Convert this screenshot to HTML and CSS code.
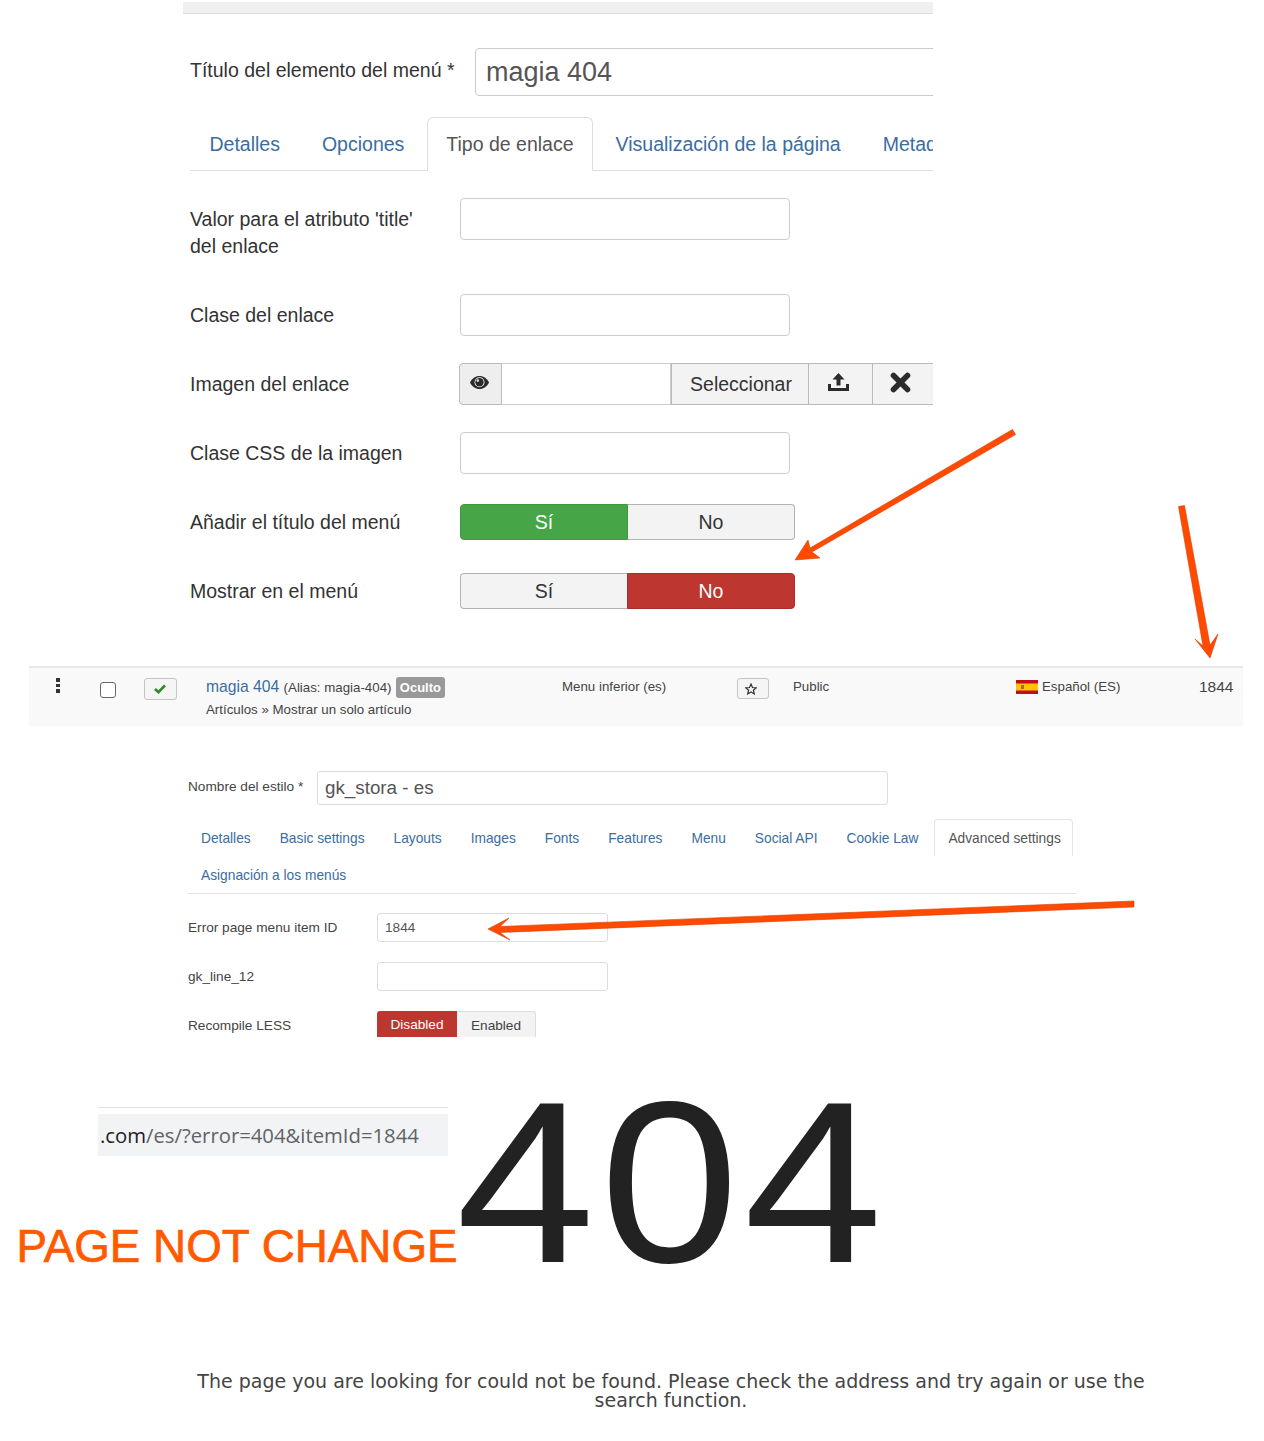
FILE: index.html
```html
<!DOCTYPE html>
<html lang="es">
<head>
<meta charset="utf-8">
<title>magia 404</title>
<link rel="stylesheet" href="styles.css">
</head>
<body>
<section class="menu-form">
  <div class="topbar"></div>
  <div class="title-row">
    <label class="title-label">Título del elemento del menú *</label>
    <div class="title-input">magia 404</div>
  </div>
  <ul class="tabs">
    <li class="tab">Detalles</li>
    <li class="tab">Opciones</li>
    <li class="tab active">Tipo de enlace</li>
    <li class="tab">Visualización de la página</li>
    <li class="tab">Metadatos</li>
  </ul>
  <div class="row row-two"><label class="lbl">Valor para el atributo 'title'<br>del enlace</label><div class="field"></div></div>
  <div class="row"><label class="lbl">Clase del enlace</label><div class="field"></div></div>
  <div class="row"><label class="lbl">Imagen del enlace</label>
    <div class="media">
      <span class="m-eye"><svg width="19" height="13" viewBox="0 0 19 13"><path fill="#2b2b2b" d="M9.500 0C5.300 0 2 2.600 0 6.500 2 10.400 5.300 13 9.500 13s7.500-2.600 9.500-6.500C17 2.600 13.700 0 9.500 0z"/><circle cx="9.500" cy="6.300" r="5" fill="#fff"/><circle cx="9.500" cy="6.300" r="4.200" fill="#2b2b2b"/><circle cx="7.800" cy="4.600" r="1.300" fill="#ddd"/></svg></span>
      <span class="m-input"></span>
      <span class="m-btn m-select">Seleccionar</span>
      <span class="m-btn m-up"><svg width="21" height="18" viewBox="0 0 21 18"><path fill="#2b2b2b" d="M10.500 0l6 6.500h-4v6h-4v-6h-4zM0 11h3v4h15v-4h3v7H0z"/></svg></span>
      <span class="m-btn m-x"><svg width="21" height="21" viewBox="0 0 21 21"><path fill="none" stroke="#2b2b2b" stroke-width="5.600" stroke-linecap="round" d="M3.500 3.500l14 14M17.500 3.500l-14 14"/></svg></span>
    </div>
  </div>
  <div class="row row-last-input"><label class="lbl">Clase CSS de la imagen</label><div class="field"></div></div>
  <div class="row row-toggle"><label class="lbl lbl-toggle">Añadir el título del menú</label>
    <div class="toggle"><span class="t-on-green">Sí</span><span class="t-off">No</span></div>
  </div>
  <div class="row row-toggle row-end"><label class="lbl lbl-toggle">Mostrar en el menú</label>
    <div class="toggle"><span class="t-off t-left">Sí</span><span class="t-on-red">No</span></div>
  </div>
</section>

<section class="list-row">
  <div class="c-drag"><i></i><i></i><i></i></div>
  <div class="c-check"><span class="checkbox"></span></div>
  <div class="c-status"><span class="mini-btn"><svg width="12" height="10" viewBox="0 0 12 10"><path fill="none" stroke="#2b8a2b" stroke-width="2.600" d="M1 5l3.500 3.200L11 1.300"/></svg></span></div>
  <div class="c-title">
    <div class="c-title-top"><span class="item-link">magia 404</span> <span class="small">(Alias: magia-404)</span> <span class="badge">Oculto</span></div>
    <div class="small sub">Artículos » Mostrar un solo artículo</div>
  </div>
  <div class="c-menu small">Menu inferior (es)</div>
  <div class="c-star"><span class="mini-btn star-btn"><svg width="12" height="12" viewBox="0 0 24 24"><path fill="none" stroke="#333" stroke-width="2.400" d="M12 2l3 7 7.500.6-5.700 4.900 1.800 7.300L12 18l-6.600 3.800 1.800-7.300L1.500 9.600 9 9z"/></svg></span></div>
  <div class="c-access small">Public</div>
  <div class="c-lang small"><svg class="flag" width="22" height="14" viewBox="0 0 22 14"><rect width="22" height="14" fill="#c60b1e"/><rect y="3.500" width="22" height="7" fill="#ffc400"/><rect x="5" y="5" width="3" height="4" fill="#ad6a1e"/></svg>Español (ES)</div>
  <div class="c-id">1844</div>
</section>

<section class="style-form">
  <div class="style-title"><label class="style-label">Nombre del estilo *</label><div class="style-input">gk_stora - es</div></div>
  <ul class="tabs2">
    <li class="tab2">Detalles</li>
    <li class="tab2">Basic settings</li>
    <li class="tab2">Layouts</li>
    <li class="tab2">Images</li>
    <li class="tab2">Fonts</li>
    <li class="tab2">Features</li>
    <li class="tab2">Menu</li>
    <li class="tab2">Social API</li>
    <li class="tab2">Cookie Law</li>
    <li class="tab2 active2">Advanced settings</li>
    <li class="tab2">Asignación a los menús</li>
  </ul>
  <div class="s-row"><label class="s-lbl">Error page menu item ID</label><div class="s-field">1844</div></div>
  <div class="s-row"><label class="s-lbl">gk_line_12</label><div class="s-field"></div></div>
  <div class="s-row s-row-end"><label class="s-lbl">Recompile LESS</label>
    <div class="s-toggle"><span class="s-dis">Disabled</span><span class="s-en">Enabled</span></div>
  </div>
</section>

<section class="error-part">
  <div class="error-left">
    <div class="url-bar"><span class="url-dark">.com</span>/es/?error=404&amp;itemId=1844</div>
    <div class="not-change">PAGE NOT CHANGE</div>
  </div>
  <div class="big404">404</div>
</section>
<p class="error-msg">The page you are looking for could not be found. Please check the address and try again or use the search function.</p>

<svg class="arrows" width="1264" height="1441" viewBox="0 0 1264 1441">
  <g fill="#ff4a00" stroke="#d93c00" stroke-width="0.600">
    <polygon points="1012.500,429.400 1015.500,434.600 812,552 820,558 795,560 808,540 810,548"/>
    <polygon points="1178.500,506.500 1184.500,505.500 1210,645 1218,634 1210,658 1195,639 1203,646"/>
    <polygon points="1134,901 1134,907 500,932.500 510,940 488,929 509,918 500,926.500"/>
  </g>
</svg>
</body>
</html>
```
FILE: styles.css
```css
* { box-sizing: border-box; }
html, body { margin: 0; padding: 0; }
body {
  position: relative;
  width: 1264px;
  height: 1441px;
  overflow: hidden;
  background: #fff;
  color: #333;
  font-family: "Liberation Sans", Arial, sans-serif;
}
ul { list-style: none; margin: 0; padding: 0; }

/* first form */
.menu-form {
  width: 750px;
  margin: 2px 0 0 183px;
  overflow: hidden;
  font-size: 19.5px;
  line-height: 27px;
}
.topbar { height: 12px; background: #f0f0f0; border-bottom: 1px solid #ddd; }
.title-row { display: flex; align-items: center; margin: 34px 0 21px 7px; }
.title-label { flex: none; width: 285px; padding-bottom: 4px; white-space: nowrap; }
.title-input {
  flex: none;
  width: 480px;
  height: 48px;
  padding: 0 10px;
  border: 1px solid #ccc;
  border-radius: 4px;
  font-size: 27px;
  line-height: 47px;
  color: #555;
}
.tabs {
  display: flex;
  flex-wrap: nowrap;
  gap: 3px;
  margin: 0 0 27px 7px;
  width: 900px;
  height: 54px;
  border-bottom: 1px solid #ddd;
}
.tab {
  flex: none;
  height: 54px;
  padding: 0 19.500px;
  line-height: 55px;
  color: #3b6d9f;
  white-space: nowrap;
}
.tab.active {
  padding: 0 18.500px;
  background: #fff;
  color: #555;
  border: 1px solid #ddd;
  border-bottom-color: #fff;
  border-radius: 6px 6px 0 0;
  line-height: 53px;
}
.row { display: flex; margin: 0 0 27px 7px; }
.row-two { margin-bottom: 34px; }
.row-last-input { margin-bottom: 30px; }
.row-toggle { margin-bottom: 33px; }
.row-end { margin-bottom: 0; }
.lbl { flex: none; width: 270px; padding-top: 8px; }
.lbl-toggle { padding-top: 5px; }
.field { width: 330px; height: 42px; border: 1px solid #ccc; border-radius: 4px; }
.media { display: flex; flex: none; width: 480px; height: 42px; margin-left: -1px; }
.media > span { display: flex; align-items: center; justify-content: center; height: 42px; border: 1px solid #bbb; border-left: 0; }
.media .m-eye { width: 43px; border-left: 1px solid #bbb; background: #eee; border-radius: 4px 0 0 4px; padding: 0 3px 4px 0; }
.media .m-input { width: 169px; background: #fff; border-color: #ccc; }
.media .m-btn { background: #f3f3f3; color: #333; }
.media .m-select { width: 138px; border-left: 1px solid #bbb; padding-left: 2px; }
.media .m-up { width: 64px; padding: 0 4px 4px 0; }
.media .m-x { width: 66px; justify-content: flex-start; padding: 0 0 4px 17px; }
.toggle { display: flex; width: 335px; height: 36px; line-height: 34px; text-align: center; }
.toggle span { flex: none; }
.t-on-green { width: 168px; background: #46a546; color: #fff; border: 1px solid #3f9a3f; border-radius: 4px 0 0 4px; }
.t-off { width: 167px; background: #f3f3f3; border: 1px solid #b3b3b3; border-left: 0; border-radius: 0 4px 4px 0; }
.t-off.t-left { border: 1px solid #b3b3b3; border-right: 0; border-radius: 4px 0 0 4px; }
.t-on-red { width: 168px; background: #bd362f; color: #fff; border: 1px solid #a92f29; border-radius: 0 4px 4px 0; }

/* list row */
.list-row {
  display: flex;
  width: 1214px;
  height: 60px;
  margin: 57px 0 0 29px;
  background: #f9f9f9;
  border-top: 2px solid #e8e8e8;
  font-size: 15.500px;
}
.small { font-size: 13.300px; color: #444; }
.list-row > div { flex: none; }
.c-drag { display: flex; flex-direction: column; gap: 2px; width: 71px; padding: 10px 0 0 27px; }
.c-drag i { display: block; width: 4px; height: 3.500px; background: #333; }
.c-check { width: 44px; padding-top: 14px; }
.checkbox { display: block; width: 16px; height: 16px; background: #fff; border: 1px solid #666; border-radius: 3px; }
.c-status { width: 62px; padding-top: 10px; }
.mini-btn {
  display: flex;
  align-items: center;
  justify-content: center;
  width: 33px;
  height: 22px;
  padding-right: 2px;
  background: #f5f5f5;
  border: 1px solid #c4c4c4;
  border-radius: 3px;
}
.c-title { width: 356px; padding-top: 8px; }
.c-title-top { height: 24px; line-height: 22px; white-space: nowrap; }
.item-link { color: #3b6d9f; font-size: 15.700px; }
.badge {
  display: inline-block;
  height: 21px;
  padding: 0 4px;
  border-radius: 3px;
  background: #999;
  color: #fff;
  font-size: 13px;
  font-weight: bold;
  line-height: 21px;
  vertical-align: 0;
}
.sub { line-height: 16px; margin-top: 2px; }
.c-menu { width: 175px; padding-top: 11px; line-height: 16px; }
.c-star { width: 56px; padding-top: 10px; }
.star-btn { width: 32px; height: 21px; padding-right: 4px; }
.c-access { width: 223px; padding-top: 11px; line-height: 16px; }
.c-lang { width: 183px; padding-top: 11px; line-height: 16px; white-space: nowrap; }
.flag { margin-right: 4px; vertical-align: -3px; }
.c-id { padding-top: 9px; line-height: 20px; color: #444; }

/* style form */
.style-form { width: 1076px; height: 266px; margin: 45px 0 0 188px; overflow: hidden; font-size: 13.650px; color: #444; }
.style-title { display: flex; align-items: center; margin-bottom: 14px; }
.style-label { width: 129px; padding-bottom: 3px; }
.style-input {
  width: 571px;
  height: 34px;
  padding: 0 7px;
  border: 1px solid #ddd;
  border-radius: 3px;
  font-size: 18.800px;
  line-height: 32px;
  color: #555;
}
.tabs2 { display: flex; flex-wrap: wrap; column-gap: 3px; width: 888px; border-bottom: 1px solid #e4e4e4; margin-bottom: 19px; font-size: 13.750px; }
.tab2 { height: 37px; padding: 0 13px; line-height: 39px; color: #3b6d9f; white-space: nowrap; }
.active2 {
  padding: 0 13px 0 13px;
  width: 139px;
  color: #555;
  border: 1px solid #e4e4e4;
  border-bottom: 0;
  border-radius: 4px 4px 0 0;
  line-height: 37px;
}
.s-row { display: flex; margin-bottom: 19px; }
.s-lbl { width: 189px; line-height: 30px; }
.s-field {
  width: 231px;
  height: 29px;
  padding: 0 7px;
  border: 1px solid #ddd;
  border-radius: 3px;
  line-height: 27px;
  color: #555;
}
.s-row-end { margin: 0; }
.s-toggle { display: flex; height: 28px; line-height: 28px; text-align: center; }
.s-dis { width: 80px; background: #bd362f; color: #fff; border-radius: 3px 0 0 0; }
.s-en { width: 79px; background: #f3f3f3; border: 1px solid #ddd; border-bottom: 0; border-left: 0; border-radius: 0 3px 0 0; }

/* 404 part */
.error-part { display: flex; height: 226px; margin-top: 70px; }
.error-left { flex: none; width: 456px; }
.url-bar {
  width: 350px;
  height: 49px;
  margin-left: 98px;
  padding: 7px 0 0 2px;
  background: linear-gradient(#e0e0e0 1px, #fff 1px, #fff 7px, #f1f3f4 7px);
  font-family: "Open Sans", sans-serif;
  font-size: 20.300px;
  line-height: 43px;
  color: #5f6368;
  white-space: nowrap;
}
.url-dark { color: #202124; }
.not-change {
  margin: 63px 0 0 16.500px;
  font-size: 45.800px;
  line-height: 56px;
  color: #ff5a00;
  -webkit-text-stroke: 0.700px #ff5a00;
  white-space: nowrap;
}
.big404 {
  flex: none;
  margin-top: -56px;
  font-size: 230px;
  line-height: 264px;
  letter-spacing: 4.700px;
  color: #222;
  transform: scaleX(1.085);
  transform-origin: 0 0;
}
.error-msg {
  width: 960px;
  margin: 39px 0 0 191px;
  font-family: "DejaVu Sans", sans-serif;
  font-size: 19px;
  line-height: 19px;
  text-align: center;
  color: #444;
}

.arrows { position: absolute; top: 0; left: 0; pointer-events: none; }
```
